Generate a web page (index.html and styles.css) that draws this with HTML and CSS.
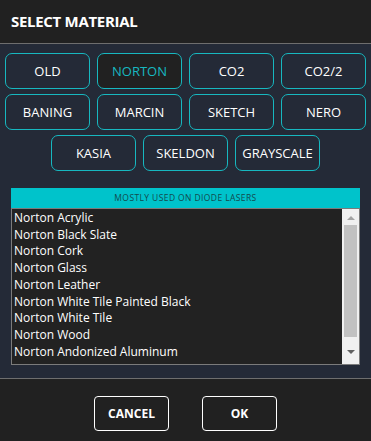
FILE: index.html
```html
<!DOCTYPE html>
<html lang="en">
<head>
  <meta charset="UTF-8" />
  <title>Select Material</title>
  <link rel="stylesheet" href="styles.css">
</head>
<body>
  <div class="dialog">
    <header class="dialog-head">
      <h1>SELECT MATERIAL</h1>
    </header>

    <main class="dialog-body">
      <div class="presets">
        <button class="preset">OLD</button>
        <button class="preset active">NORTON</button>
        <button class="preset">CO2</button>
        <button class="preset">CO2/2</button>
        <button class="preset">BANING</button>
        <button class="preset">MARCIN</button>
        <button class="preset">SKETCH</button>
        <button class="preset">NERO</button>
        <button class="preset">KASIA</button>
        <button class="preset">SKELDON</button>
        <button class="preset">GRAYSCALE</button>
      </div>

      <div class="materials">
        <div class="materials-title">MOSTLY USED ON DIODE LASERS</div>
        <div class="materials-box">
          <ul class="materials-list">
            <li>Norton Acrylic</li>
            <li>Norton Black Slate</li>
            <li>Norton Cork</li>
            <li>Norton Glass</li>
            <li>Norton Leather</li>
            <li>Norton White Tile Painted Black</li>
            <li>Norton White Tile</li>
            <li>Norton Wood</li>
            <li>Norton Andonized Aluminum</li>
          </ul>
          <div class="scrollbar">
            <span class="arrow up"></span>
            <div class="track"><div class="thumb"></div></div>
            <span class="arrow down"></span>
          </div>
        </div>
      </div>
    </main>

    <footer class="dialog-foot">
      <button class="action">CANCEL</button>
      <button class="action">OK</button>
    </footer>
  </div>
</body>
</html>
```

FILE: styles.css
```css
:root {
  --head-bg: #212121;
  --body-bg: #242a37;
  --teal: #17b8c0;
  --teal-bar: #00c3cb;
  --line: #6e6e6e;
}

* {
  box-sizing: border-box;
}

body {
  margin: 0;
  font-family: 'Open Sans', 'Noto Sans', sans-serif;
  color: #fff;
  background: var(--head-bg);
}

.dialog {
  width: 371px;
  height: 441px;
  display: flex;
  flex-direction: column;
}

.dialog-head {
  height: 44px;
  padding: 0 11px;
  display: flex;
  align-items: center;
  background: var(--head-bg);
  border-bottom: 1px solid var(--line);
}

.dialog-head h1 {
  margin: 0 0 1px;
  font-size: 15px;
  font-weight: 700;
  letter-spacing: -0.3px;
}

.dialog-body {
  height: 335px;
  padding: 9px 5px 0;
  background: var(--body-bg);
  border-bottom: 1px solid var(--line);
}

.presets {
  display: flex;
  flex-wrap: wrap;
  justify-content: center;
  gap: 5px 7px;
}

.preset {
  width: 85px;
  height: 36px;
  padding: 0;
  background: transparent;
  color: #fff;
  font-family: inherit;
  font-size: 13px;
  border: 1px solid var(--teal);
  border-radius: 7px;
}

.preset.active {
  background: var(--head-bg);
  color: var(--teal);
}

.materials {
  margin: 17px 6px 0;
}

.materials-title {
  height: 20px;
  line-height: 20px;
  text-align: center;
  background: var(--teal-bar);
  color: #134a4e;
  font-size: 8.5px;
  letter-spacing: 0.4px;
}

.materials-box {
  display: flex;
  height: 157px;
  background: #222;
  border: 1px solid #7b7b7b;
}

.materials-list {
  flex: 1;
  margin: 0;
  padding: 1px 2px 0;
  list-style: none;
  font-size: 12px;
  line-height: 16.7px;
}

.scrollbar {
  width: 17px;
  display: flex;
  flex-direction: column;
  align-items: center;
  background: #f0f0f0;
}

.arrow {
  width: 0;
  height: 0;
  border-left: 4px solid transparent;
  border-right: 4px solid transparent;
}

.arrow.up {
  margin: 7px 0 5px;
  border-bottom: 4px solid #a3a3a3;
}

.arrow.down {
  margin: 13px 0 0;
  border-top: 4px solid #606060;
}

.track {
  width: 13px;
}

.thumb {
  height: 112px;
  background: #c1c1c1;
}

.dialog-foot {
  flex: 1;
  display: flex;
  justify-content: center;
  gap: 33px;
  padding-top: 17px;
  background: var(--head-bg);
}

.action {
  width: 75px;
  height: 35px;
  background: transparent;
  color: #fff;
  font-family: inherit;
  font-size: 12px;
  font-weight: 700;
  border: 1px solid #fff;
  border-radius: 4px;
}
```
